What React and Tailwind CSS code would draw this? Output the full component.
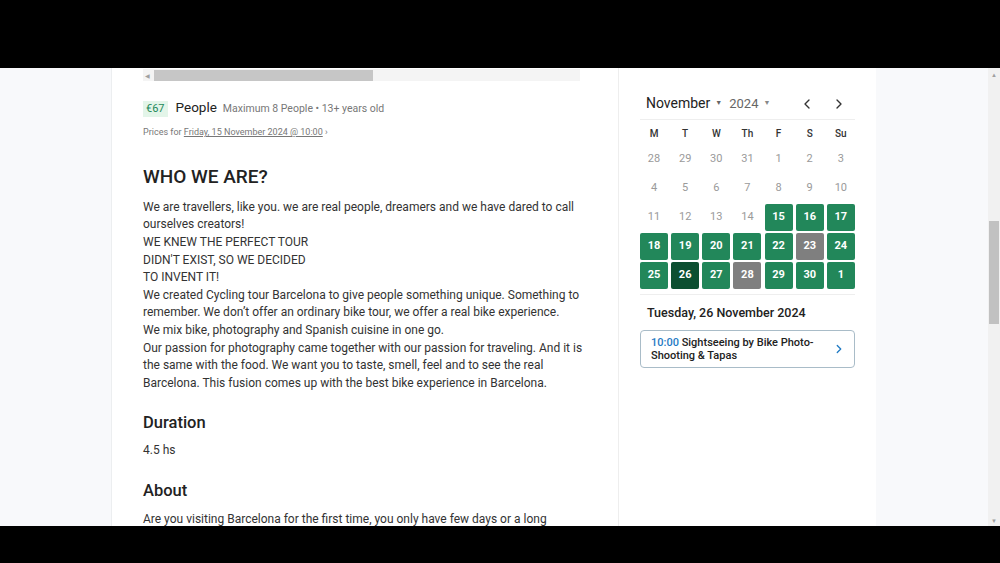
import { ChevronLeft, ChevronRight } from "lucide-react";

const weekdays = ["M", "T", "W", "Th", "F", "S", "Su"];

// state: "out" = muted, "open" = bookable, "full" = sold out, "sel" = selected
const days = [
    [28, "out"], [29, "out"], [30, "out"], [31, "out"], [1, "out"], [2, "out"], [3, "out"],
    [4, "out"], [5, "out"], [6, "out"], [7, "out"], [8, "out"], [9, "out"], [10, "out"],
    [11, "out"], [12, "out"], [13, "out"], [14, "out"], [15, "open"], [16, "open"], [17, "open"],
    [18, "open"], [19, "open"], [20, "open"], [21, "open"], [22, "open"], [23, "full"], [24, "open"],
    [25, "open"], [26, "sel"], [27, "open"], [28, "full"], [29, "open"], [30, "open"], [1, "open"],
];

function DayCell({ n, state }) {
    const base = "h-[27px] w-[28px] flex items-center justify-center rounded-[2px] text-[11px]";
    if (state === "out") return <div className={`${base} text-[#9a9a9a]`}>{n}</div>;
    const bg =
        state === "sel" ? "bg-[#0c4f31]" : state === "full" ? "bg-[#7f7f7f]" : "bg-[#22875a]";
    return <div className={`${base} ${bg} text-white font-bold`}>{n}</div>;
}

function Calendar() {
    return (
        <div className="w-[215px]">
            <div className="flex items-center h-[32px] border-b border-[#eeeeee] pl-[6px]">
                <span className="text-[14px] text-[#222]">November</span>
                <span className="text-[7px] text-[#666] ml-[5px]">▼</span>
                <span className="text-[13px] text-[#666] ml-[7px]">2024</span>
                <span className="text-[7px] text-[#888] ml-[5px]">▼</span>
                <div className="ml-auto flex items-center gap-[16px] pr-[8px]">
                    <ChevronLeft className="w-[16px] h-[16px] text-[#333]" strokeWidth={2} />
                    <ChevronRight className="w-[16px] h-[16px] text-[#333]" strokeWidth={2} />
                </div>
            </div>
            <div className="grid grid-cols-7 gap-x-[3px] mt-[4px]">
                {weekdays.map((w) => (
                    <div key={w} className="h-[18px] flex items-center justify-center text-[10px] font-medium text-[#333] w-[28px]">
                        {w}
                    </div>
                ))}
            </div>
            <div className="grid grid-cols-7 gap-x-[3px] gap-y-[2px] mt-[4px] pb-[5px] border-b border-[#eeeeee]">
                {days.map(([n, s], i) => (
                    <DayCell key={i} n={n} state={s} />
                ))}
            </div>
            <div className="text-[12.5px] leading-[15px] font-medium text-[#222] mt-[10px] pl-[7px]">Tuesday, 26 November 2024</div>
            <div className="mt-[10px] border border-[#a9bcc8] rounded-[4px] h-[38px] flex items-center pl-[10px] pr-[8px]">
                <div className="text-[11px] font-medium leading-[13px] text-[#222] flex-1">
                    <span className="text-[#1f7ac4]">10:00</span> Sightseeing by Bike Photo-
                    <br />
                    Shooting &amp; Tapas
                </div>
                <ChevronRight className="w-[14px] h-[14px] text-[#1f7ac4]" strokeWidth={2.2} />
            </div>
        </div>
    );
}

function Description() {
    return (
        <div className="pl-[31px] pr-[30px]">
            {/* horizontal scroller of the photo strip above */}
            <div className="h-[12px] mt-[1px] bg-[#f4f4f4] flex items-center w-[437px]">
                <span className="text-[6px] text-[#a0a0a0] ml-[2px]">◀</span>
                <div className="h-[11px] w-[219px] bg-[#c6c6c6] ml-[4px]" />
            </div>
            <div className="flex items-baseline mt-[16px]">
                <span className="bg-[#e3f5e9] text-[#23895a] text-[11px] px-[3px] py-[1px] leading-[14px]">€67</span>
                <span className="text-[13.5px] text-[#222] ml-[8px]">People</span>
                <span className="text-[10.5px] text-[#777] ml-[6px]">Maximum 8 People • 13+ years old</span>
            </div>
            <div className="text-[9px] text-[#777] mt-[9px]">
                Prices for <span className="underline">Friday, 15 November 2024 @ 10:00</span> ›
            </div>
            <h2 className="text-[19px] font-medium text-[#222] mt-[25px] leading-[24px]">WHO WE ARE?</h2>
            <div className="text-[12px] leading-[17.6px] text-[#333] mt-[10px]">
                <p>We are travellers, like you. we are real people, dreamers and we have dared to call ourselves creators!</p>
                <p>WE KNEW THE PERFECT TOUR</p>
                <p>DIDN'T EXIST, SO WE DECIDED</p>
                <p>TO INVENT IT!</p>
                <p>
                    We created Cycling tour Barcelona to give people something unique. Something to remember. We don’t offer an
                    ordinary bike tour, we offer a real bike experience.
                </p>
                <p>We mix bike, photography and Spanish cuisine in one go.</p>
                <p>
                    Our passion for photography came together with our passion for traveling. And it is the same with the food.
                    We want you to taste, smell, feel and to see the real Barcelona. This fusion comes up with the best bike
                    experience in Barcelona.
                </p>
            </div>
            <h3 className="text-[16.5px] font-medium text-[#222] mt-[20px] leading-[22px]">Duration</h3>
            <p className="text-[12px] text-[#333] mt-[7px]">4.5 hs</p>
            <h3 className="text-[16.5px] font-medium text-[#222] mt-[21px] leading-[22px]">About</h3>
            <p className="text-[12px] text-[#333] mt-[8px] whitespace-nowrap">
                Are you visiting Barcelona for the first time, you only have few days or a long
            </p>
        </div>
    );
}

export default function App() {
    return (
        <div className="w-[1000px] h-[563px] bg-black flex flex-col" style={{ fontFamily: "Roboto, sans-serif" }}>
            <div className="h-[68px] shrink-0" />
            <div className="h-[458px] flex bg-[#f8f9fb] overflow-hidden">
                <div className="w-[111px] shrink-0" />
                <div className="w-[765px] shrink-0 bg-white border-l border-[#eceef0] flex">
                    <div className="w-[507px] shrink-0 border-r border-[#eeeeee] overflow-hidden">
                        <Description />
                    </div>
                    <div className="pl-[21px] pt-[20px]">
                        <Calendar />
                    </div>
                </div>
                <div className="flex-1" />
                {/* page scrollbar */}
                <div className="w-[12px] bg-[#f1f1f1] flex flex-col items-center">
                    <span className="text-[6px] text-[#a0a0a0] mt-[2px]">▲</span>
                    <div className="w-[10px] h-[103px] bg-[#c1c1c1] mt-[142px]" />
                    <span className="text-[6px] text-[#a0a0a0] mt-auto mb-[1px]">▼</span>
                </div>
            </div>
            <div className="flex-1" />
        </div>
    );
}
